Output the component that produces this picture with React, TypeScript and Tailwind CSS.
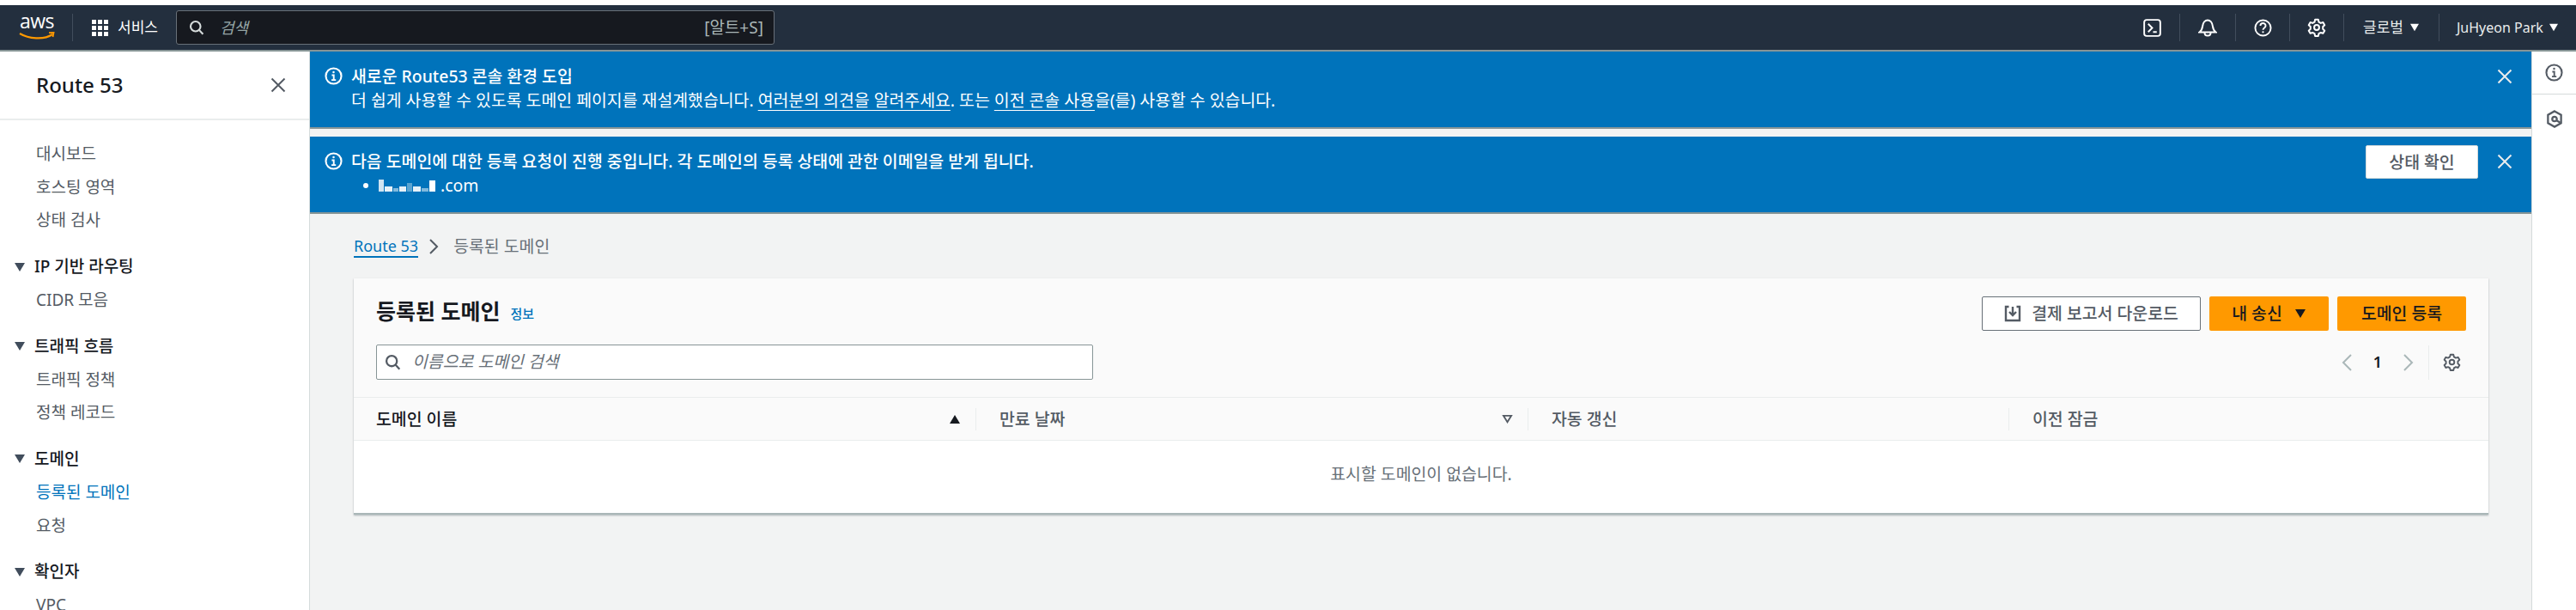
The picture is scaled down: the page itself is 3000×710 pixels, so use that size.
import React from "react";

const Tri = ({ className = "" }: { className?: string }) => (
  <svg viewBox="0 0 14 12" className={className} fill="currentColor"><path d="M1 1h12L7 11z" /></svg>
);

const InfoIcon = ({ className = "" }: { className?: string }) => (
  <svg viewBox="0 0 20 20" className={className} fill="none" stroke="currentColor" strokeWidth="2">
    <circle cx="10" cy="10" r="8.6" />
    <path d="M8 9h2.2v5M7.6 14.4h5" strokeWidth="1.8" />
    <circle cx="10" cy="5.8" r="1.2" fill="currentColor" stroke="none" />
  </svg>
);

const CloseIcon = ({ className = "" }: { className?: string }) => (
  <svg viewBox="0 0 18 18" className={className} fill="none" stroke="currentColor" strokeWidth="2"><path d="M1.5 1.5l15 15M16.5 1.5l-15 15" /></svg>
);

const SearchIcon = ({ className = "" }: { className?: string }) => (
  <svg viewBox="0 0 20 20" className={className} fill="none" stroke="currentColor" strokeWidth="2.4"><circle cx="8.6" cy="8.6" r="6.4" /><path d="M13.2 13.2l5 5.4" /></svg>
);

const GearIcon = ({ className = "" }: { className?: string }) => (
  <svg viewBox="0 0 24 24" className={className} fill="none" stroke="currentColor" strokeWidth="2.2" strokeLinejoin="round">
    <path d="M10 2h4l.7 3 2.5 1.4 2.9-.9 2 3.4-2.2 2.1v2.9l2.2 2.1-2 3.4-2.9-.9-2.5 1.4-.7 3h-4l-.7-3-2.5-1.4-2.9.9-2-3.4 2.2-2.1v-2.9L1.9 8.9l2-3.4 2.9.9L9.3 5z" />
    <circle cx="12" cy="12" r="3.2" />
  </svg>
);

const NavCell = ({ children, className = "" }: { children: React.ReactNode; className?: string }) => (
  <div className={`flex h-[32px] items-center justify-center border-l border-[#414d5c] ${className}`}>{children}</div>
);

const SideItem = ({ label, active }: { label: string; active?: boolean }) => (
  <div className={`flex h-[38.7px] items-center pl-[42px] text-[19px] ${active ? "text-[#0073bb]" : "text-[#545b64]"}`}>{label}</div>
);

const SideGroup = ({ label, items, active }: { label: string; items: string[]; active?: string }) => (
  <div className="mt-[15.2px]">
    <div className="flex h-[38.7px] items-center pl-[16px] text-[19px] font-medium text-[#16191f]">
      <Tri className="mr-[10px] h-[12px] w-[14px] text-[#414d5c]" />
      {label}
    </div>
    {items.map((i) => (
      <SideItem key={i} label={i} active={i === active} />
    ))}
  </div>
);

const Flash = ({ children, action }: { children: React.ReactNode; action?: React.ReactNode }) => (
  <div className="flex h-[90px] items-start border-b-2 border-[#879596] bg-[#0073bb] pl-[17px] pr-[22px] pt-[15px] text-white">
    <InfoIcon className="mt-[3px] h-[21px] w-[21px] shrink-0" />
    <div className="ml-[10px] flex-1 text-[19.4px] leading-[28px]">{children}</div>
    {action}
    <CloseIcon className="ml-[22px] mt-[5px] h-[18px] w-[18px] shrink-0 text-[#eaeded]" />
  </div>
);

const Th = ({ label, width, children, dark, first }: { label: string; width?: string; children?: React.ReactNode; dark?: boolean; first?: boolean }) => (
  <div className={`flex h-[26px] items-center ${width ?? "flex-1"} ${first ? "pl-[26px]" : "border-l border-[#eaeded] pl-[27px]"} pr-[20px] text-[19.4px] ${dark ? "font-medium text-[#16191f]" : "font-medium text-[#545b64]"}`}>
    <span>{label}</span>
    {children}
  </div>
);

export default function App() {
  return (
    <div className="flex h-[710px] w-[3000px] flex-col overflow-hidden bg-white font-['Noto_Sans','Noto_Sans_CJK_KR',sans-serif]">
      <div className="h-[6px] shrink-0 bg-white" />
      <header className="flex h-[54px] shrink-0 items-center border-b-2 border-[#879596] bg-[#232f3e] text-white">
        <div className="relative ml-[22px] flex h-[40px] w-[42px] flex-col items-center">
          <span className="text-[23px] leading-[24px] tracking-[-0.5px] font-['Open_Sans',sans-serif]">aws</span>
          <svg viewBox="0 0 42 10" className="absolute left-0 top-[25px] h-[10px] w-[42px]" fill="none" stroke="#ff9900" strokeWidth="2.2">
            <path d="M1 2c10 6 28 8 38 1" />
            <path d="M35 1.2l5.5-.2-1 5" strokeWidth="1.8" />
          </svg>
        </div>
        <div className="ml-[20px] h-[32px] border-l border-[#414d5c]" />
        <div className="ml-[22px] grid grid-cols-3 gap-[2px]">
          {[0, 1, 2, 3, 4, 5, 6, 7, 8].map((i) => (
            <div key={i} className="h-[5px] w-[5px] bg-white" />
          ))}
        </div>
        <span className="ml-[11px] text-[17px]">서비스</span>
        <div className="ml-[21px] flex h-[40px] w-[697px] items-center rounded-[3px] border border-[#687078] bg-[#16191f] pl-[14px] pr-[12px]">
          <SearchIcon className="h-[18px] w-[18px] text-[#d5dbdb]" />
          <span className="ml-[18px] text-[18px] italic text-[#95a5a6]">검색</span>
          <span className="ml-auto text-[19px] text-[#aab7b8]">[알트+S]</span>
        </div>
        <div className="ml-auto flex items-center">
          <div className="flex h-[32px] w-[64px] items-center justify-center">
            <svg viewBox="0 0 22 22" className="h-[21px] w-[21px]" fill="none" stroke="white" strokeWidth="2">
              <rect x="1.2" y="1.2" width="19.6" height="19.6" rx="3" />
              <path d="M6 6l5 5-5 5M12 16h4.5" />
            </svg>
          </div>
          <NavCell className="w-[65px]">
            <svg viewBox="0 0 22 22" className="h-[22px] w-[22px]" fill="none" stroke="white" strokeWidth="2">
              <path d="M1.5 16.5c3-2 3.2-4 3.6-7C5.600 5.500 8 2.500 11 2.500s5.400 3 5.900 7c.4 3 .6 5 3.600 7z" />
              <path d="M7.500 17c0 2.300 1.500 3.600 3.500 3.600s3.500-1.300 3.500-3.600" />
            </svg>
          </NavCell>
          <NavCell className="w-[63px]">
            <svg viewBox="0 0 22 22" className="h-[21px] w-[21px]" fill="none" stroke="white" strokeWidth="2">
              <circle cx="11" cy="11" r="9.500" />
              <path d="M7.800 8.500c0-4.400 6.400-4.400 6.400-.2 0 2.700-3.200 2.500-3.200 5" />
              <circle cx="11" cy="16" r="1.200" fill="white" stroke="none" />
            </svg>
          </NavCell>
          <NavCell className="w-[63px]">
            <GearIcon className="h-[22px] w-[22px] text-white" />
          </NavCell>
          <NavCell className="w-[111px] text-[17px] text-[#eaeded]">
            <span>글로벌</span>
            <Tri className="ml-[7px] h-[10px] w-[12px] text-white" />
          </NavCell>
          <NavCell className="w-[160px] justify-start pl-[20px] text-[16px] text-[#eaeded]">
            <span className="whitespace-nowrap">JuHyeon Park</span>
            <Tri className="ml-[6px] h-[10px] w-[12px] text-white" />
          </NavCell>
        </div>
      </header>

      <div className="flex min-h-0 flex-1">
        <aside className="w-[361px] shrink-0 border-r border-[#d5dbdb] bg-white">
          <div className="flex h-[80px] items-center justify-between border-b-2 border-[#eaeded] pl-[42px] pr-[27px]">
            <span className="text-[24px] font-medium text-[#16191f]">Route 53</span>
            <CloseIcon className="h-[18px] w-[18px] text-[#545b64]" />
          </div>
          <div className="pt-[20px]">
            <SideItem label="대시보드" />
            <SideItem label="호스팅 영역" />
            <SideItem label="상태 검사" />
            <SideGroup label="IP 기반 라우팅" items={["CIDR 모음"]} />
            <SideGroup label="트래픽 흐름" items={["트래픽 정책", "정책 레코드"]} />
            <SideGroup label="도메인" items={["등록된 도메인", "요청"]} active="등록된 도메인" />
            <SideGroup label="확인자" items={["VPC"]} />
          </div>
        </aside>

        <main className="min-w-0 flex-1 bg-[#f2f3f3]">
          <Flash>
            <div className="font-medium">새로운 Route53 콘솔 환경 도입</div>
            <div>
              더 쉽게 사용할 수 있도록 도메인 페이지를 재설계했습니다. <span className="underline underline-offset-4">여러분의 의견을 알려주세요</span>. 또는 <span className="underline underline-offset-4">이전 콘솔 사용</span>을(를) 사용할 수 있습니다.
            </div>
          </Flash>
          <div className="h-[9px]" />
          <Flash
            action={
              <div className="-mt-[5px] flex h-[39px] w-[131px] items-center justify-center rounded-[2px] border border-[#d5dbdb] bg-white text-[19.4px] font-medium text-[#545b64]">상태 확인</div>
            }
          >
            <div className="font-medium">다음 도메인에 대한 등록 요청이 진행 중입니다. 각 도메인의 등록 상태에 관한 이메일을 받게 됩니다.</div>
            <div className="flex items-center pl-[14px]">
              <span className="h-[6px] w-[6px] rounded-full bg-white" />
              <span className="ml-[12px] flex h-[14px] w-[72px] items-end gap-[1px]">
                <span className="h-[14px] w-[6px] bg-[#cfe4f2]" />
                <span className="h-[6px] w-[9px] bg-[#e6f1f8]" />
                <span className="h-[4px] w-[6px] bg-[#7fb8dc]" />
                <span className="h-[6px] w-[8px] bg-[#e6f1f8]" />
                <span className="h-[10px] w-[6px] bg-[#5ba4d1]" />
                <span className="h-[6px] w-[9px] bg-[#e6f1f8]" />
                <span className="h-[4px] w-[8px] bg-[#7fb8dc]" />
                <span className="h-[13px] w-[7px] bg-white" />
              </span>
              <span className="text-[19.4px]">.com</span>
            </div>
          </Flash>

          <div className="pl-[51px] pr-[50px]">
            <nav className="flex h-[75px] items-center text-[19.4px]">
              <span className="border-b-2 border-[#0073bb] text-[18px] leading-[24px] text-[#0073bb]">Route 53</span>
              <svg viewBox="0 0 12 20" className="ml-[12px] h-[20px] w-[12px] text-[#545b64]" fill="none" stroke="currentColor" strokeWidth="2"><path d="M2 2l8 8-8 8" /></svg>
              <span className="ml-[17px] text-[#687078]">등록된 도메인</span>
            </nav>

            <section className="border-b-2 border-[#aab7b8] bg-white shadow-[0_1px_2px_rgba(0,28,36,0.3)]">
              <div className="h-[139px] border-b border-[#eaeded] bg-[#fafafa] px-[26px] pt-[21px]">
                <div className="flex h-[40px] items-center justify-between">
                  <div className="flex -translate-y-[2px] items-center">
                    <h1 className="text-[25px] font-bold text-[#16191f]">등록된 도메인</h1>
                    <span className="ml-[12px] mt-[5px] text-[15px] font-medium text-[#0073bb]">정보</span>
                  </div>
                  <div className="flex gap-[10px]">
                    <div className="flex h-[40px] w-[255px] items-center justify-center rounded-[2px] border border-[#687078] bg-white text-[19.4px] font-medium text-[#545b64]">
                      <svg viewBox="0 0 20 20" className="mr-[12px] h-[20px] w-[20px]" fill="none" stroke="currentColor" strokeWidth="2.4">
                        <path d="M5.500 2H2v16h16V2h-3.500" />
                        <path d="M10 2v9M6 8l4 4 4-4" />
                      </svg>
                      결제 보고서 다운로드
                    </div>
                    <div className="flex h-[40px] w-[139px] items-center justify-center gap-[14px] rounded-[2px] bg-[#ff9900] text-[19.4px] font-medium text-[#16191f]">
                      내 송신
                      <Tri className="h-[12px] w-[14px]" />
                    </div>
                    <div className="flex h-[40px] w-[150px] items-center justify-center rounded-[2px] bg-[#ff9900] text-[19.4px] font-medium text-[#16191f]">도메인 등록</div>
                  </div>
                </div>
                <div className="mt-[16px] flex items-center justify-between">
                  <div className="flex h-[41px] w-[835px] items-center rounded-[2px] border border-[#879596] bg-white pl-[9px]">
                    <SearchIcon className="h-[19px] w-[19px] text-[#545b64]" />
                    <span className="ml-[13px] -translate-y-[1px] text-[19.4px] italic text-[#687078]">이름으로 도메인 검색</span>
                  </div>
                  <div className="mr-[6px] flex h-[40px] items-center text-[#aab7b8]">
                    <svg viewBox="0 0 14 22" className="h-[22px] w-[14px]" fill="none" stroke="currentColor" strokeWidth="2"><path d="M12 2L3 11l9 9" /></svg>
                    <span className="mx-[24px] text-[18px] font-semibold text-[#16191f]">1</span>
                    <svg viewBox="0 0 14 22" className="h-[22px] w-[14px]" fill="none" stroke="currentColor" strokeWidth="2"><path d="M2 2l9 9-9 9" /></svg>
                    <div className="ml-[16px] flex h-[40px] items-center border-l border-[#eaeded] pl-[16px]">
                      <GearIcon className="h-[21px] w-[21px] text-[#545b64]" />
                    </div>
                  </div>
                </div>
              </div>
              <div className="flex h-[50px] items-center border-b border-[#eaeded] bg-[#fafafa]">
                <Th label="도메인 이름" width="w-[724px]" dark first>
                  <Tri className="ml-auto mr-[-3px] h-[12px] w-[14px] rotate-180 text-[#16191f]" />
                </Th>
                <Th label="만료 날짜" width="w-[643px]">
                  <svg viewBox="0 0 14 12" className="ml-auto mr-[-3px] h-[11px] w-[13px] text-[#545b64]" fill="none" stroke="currentColor" strokeWidth="2"><path d="M2 2h10l-5 8z" /></svg>
                </Th>
                <Th label="자동 갱신" width="w-[560px]" />
                <Th label="이전 잠금" />
              </div>
              <div className="flex h-[84px] items-center justify-center pb-[6px] text-[19.4px] text-[#687078]">표시할 도메인이 없습니다.</div>
            </section>
          </div>
        </main>

        <aside className="w-[52px] shrink-0 border-l border-[#d5dbdb] bg-white text-[#545b64]">
          <div className="flex h-[50px] items-center justify-center border-b border-[#d5dbdb]">
            <InfoIcon className="h-[21px] w-[21px]" />
          </div>
          <div className="flex h-[56px] items-center justify-center">
            <svg viewBox="0 0 20 22" className="h-[21px] w-[20px]" fill="none" stroke="currentColor" strokeWidth="2.4">
              <path d="M10 1.500l8 4.500v10l-8 4.500-8-4.500V6z" />
              <circle cx="10" cy="11" r="2.800" />
              <path d="M12 12.500l5 3" />
            </svg>
          </div>
        </aside>
      </div>
    </div>
  );
}
